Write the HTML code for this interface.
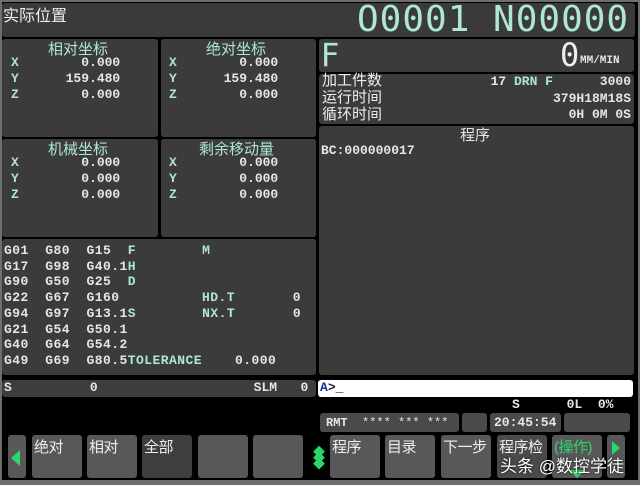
<!DOCTYPE html>
<html><head><meta charset="utf-8"><style>
*{margin:0;padding:0;box-sizing:border-box}
body{width:640px;height:485px;background:#000;position:relative;overflow:hidden;font-family:"Liberation Mono","Noto Sans CJK SC",monospace;color:#e6e6e6}
.a{position:absolute}
.p{position:absolute;background:#3b3b3b;border-radius:3px}
.cn{font-family:"Liberation Sans","Noto Sans CJK SC",sans-serif}
.m{color:#aee6d8}
.t{font-size:13px;font-weight:bold;line-height:16px;white-space:pre}
.k{position:absolute;top:435px;height:43px;background:#585858;border-radius:3px;font-family:"Liberation Sans","Noto Sans CJK SC",sans-serif;font-size:15px;color:#eee;padding:1px 2px;white-space:nowrap;letter-spacing:-0.5px}
</style></head><body>
<div class="a" style="left:0;top:0;width:640px;height:485px;background:#6e6e6e"></div>
<div class="a" style="left:2px;top:2px;width:636px;height:478px;background:#000"></div>
<div class="p" style="left:2px;top:3px;width:633px;height:34px;background:#3a3a3a"></div>
<div class="a cn" style="left:3px;top:2px;font-size:16px;color:#eee">实际位置</div>
<div class="a m" style="left:357px;top:-1px;font-family:'DejaVu Sans Mono','Liberation Mono',monospace;font-size:36px;letter-spacing:1px">O0001 N00000</div>

<div class="p" style="left:2px;top:39px;width:156px;height:98px"></div>
<div class="p" style="left:161px;top:39px;width:155px;height:98px"></div>
<div class="p" style="left:2px;top:139px;width:156px;height:98px"></div>
<div class="p" style="left:161px;top:139px;width:155px;height:98px"></div>
<div class="a cn m" style="left:48px;top:38px;font-size:15px">相对坐标</div>
<div class="a cn m" style="left:206px;top:38px;font-size:15px">绝对坐标</div>
<div class="a cn m" style="left:48px;top:138px;font-size:15px">机械坐标</div>
<div class="a cn m" style="left:199px;top:138px;font-size:15px">剩余移动量</div>
<div class="a t" style="left:11px;top:55px"><span class="m">X</span>        0.000
<span class="m">Y</span>      159.480
<span class="m">Z</span>        0.000</div>
<div class="a t" style="left:169px;top:55px"><span class="m">X</span>        0.000
<span class="m">Y</span>      159.480
<span class="m">Z</span>        0.000</div>
<div class="a t" style="left:11px;top:155px"><span class="m">X</span>        0.000
<span class="m">Y</span>        0.000
<span class="m">Z</span>        0.000</div>
<div class="a t" style="left:169px;top:155px"><span class="m">X</span>        0.000
<span class="m">Y</span>        0.000
<span class="m">Z</span>        0.000</div>

<div class="p" style="left:2px;top:239px;width:314px;height:136px"></div>
<div class="a t" style="left:4px;top:243px;line-height:15.7px;letter-spacing:0.45px">G01  G80  G15  <span class="m">F</span>        <span class="m">M</span>
G17  G98  G40.1<span class="m">H</span>
G90  G50  G25  <span class="m">D</span>
G22  G67  G160          <span class="m">HD.T</span>       0
G94  G97  G13.1<span class="m">S</span>        <span class="m">NX.T</span>       0
G21  G54  G50.1
G40  G64  G54.2
G49  G69  G80.5<span class="m">TOLERANCE</span>    0.000</div>

<div class="p" style="left:2px;top:380px;width:314px;height:17px;background:#3d3d3d"></div>
<div class="a t" style="left:4px;top:380px">S          0                    SLM   0</div>
<div class="a" style="left:318px;top:380px;width:315px;height:17px;background:#fff;border-radius:3px"></div>
<div class="a t" style="left:320px;top:380px;color:#223"><span style="color:#1a2aa0">A</span>&gt;_</div>

<div class="p" style="left:319px;top:39px;width:315px;height:33px"></div>
<div class="a m" style="left:321px;top:36px;font-family:'DejaVu Sans','Liberation Sans',sans-serif;font-size:32px">F</div>
<div class="a" style="left:560px;top:36px;font-family:'DejaVu Sans Mono',monospace;font-size:32px;color:#eee">0</div>
<div class="a t" style="left:580px;top:53px;font-size:11px">MM/MIN</div>
<div class="p" style="left:319px;top:74px;width:315px;height:50px"></div>
<div class="a cn" style="left:322px;top:72px;font-size:15px;line-height:17px;color:#eee">加工件数<br>运行时间<br>循环时间</div>
<div class="a t" style="left:489px;top:74px;line-height:16.5px;text-align:right;width:142px">17 <span class="m">DRN F</span>      3000
379H18M18S
0H 0M 0S</div>
<div class="p" style="left:319px;top:126px;width:315px;height:249px"></div>
<div class="a cn" style="left:460px;top:124px;font-size:15px">程序</div>
<div class="a t" style="left:321px;top:143px">BC:000000017</div>

<div class="a t" style="left:512px;top:397px">S      0L  0%</div>
<div class="p" style="left:320px;top:413px;width:139px;height:19px;background:#4a4a4a"></div>
<div class="a t" style="left:326px;top:415px;font-size:12px">RMT  <span style="font-weight:normal">**** *** ***</span></div>
<div class="p" style="left:462px;top:413px;width:25px;height:19px;background:#4a4a4a"></div>
<div class="p" style="left:490px;top:413px;width:71px;height:19px;background:#4a4a4a"></div>
<div class="a t" style="left:494px;top:415px">20:45:54</div>
<div class="p" style="left:564px;top:413px;width:66px;height:19px;background:#4a4a4a"></div>

<div class="k" style="left:8px;width:18px"></div>
<div class="a" style="left:11px;top:450px;width:0;height:0;border-top:8px solid transparent;border-bottom:8px solid transparent;border-right:9px solid #2cd66a"></div>
<div class="k" style="left:32px;width:50px">绝对</div>
<div class="k" style="left:87px;width:50px">相对</div>
<div class="k" style="left:142px;width:50px;background:#3e3e3e">全部</div>
<div class="k" style="left:198px;width:50px"></div>
<div class="k" style="left:253px;width:50px"></div>
<div class="a" style="left:313px;top:450px;color:#2cd66a;font-size:12px;line-height:6px">◆<br>◆<br>◆</div>
<div class="k" style="left:330px;width:50px">程序</div>
<div class="k" style="left:385px;width:50px">目录</div>
<div class="k" style="left:441px;width:50px">下一步</div>
<div class="k" style="left:497px;width:50px;background:#4a4a4a">程序检</div>
<div class="k" style="left:552px;width:50px;color:#2cd66a">(操作)</div>
<div class="a" style="left:569px;top:470px;width:0;height:0;border-left:8px solid transparent;border-right:8px solid transparent;border-top:8px solid #2cd66a"></div>
<div class="k" style="left:607px;width:18px"></div>
<div class="a" style="left:612px;top:441px;width:0;height:0;border-top:7px solid transparent;border-bottom:7px solid transparent;border-left:8px solid #2cd66a"></div>
<div class="a cn" style="left:500px;top:452px;font-size:17px;color:#fff;text-shadow:0 0 2px #000">头条 @数控学徒</div>
</body></html>
